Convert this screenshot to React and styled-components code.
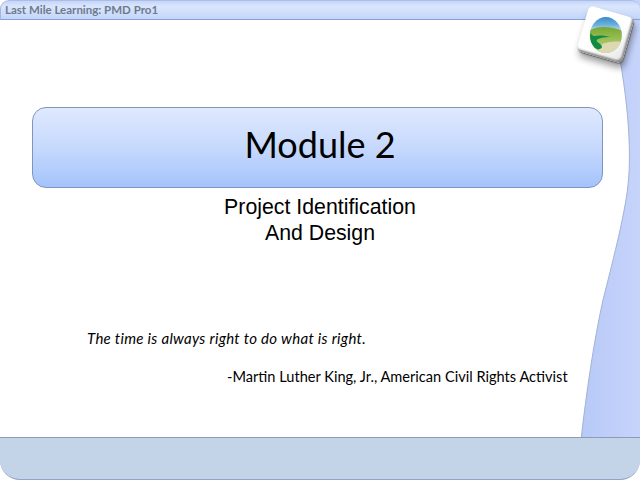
import React from "react";
import styled, { createGlobalStyle } from "styled-components";

const GlobalStyle = createGlobalStyle`
  html, body {
    margin: 0;
    padding: 0;
    background: #ffffff;
  }
`;

function SideBand() {
  return (
    <BandSvg viewBox="0 0 640 480" aria-hidden="true">
      <defs>
        <linearGradient id="band" x1="0" y1="0" x2="1" y2="0">
          <stop offset="0" stopColor="#b8c9f7" />
          <stop offset="1" stopColor="#c6d4fb" />
        </linearGradient>
      </defs>
      <path
        d="M612 0 L640 0 L640 440 L581 440 C 586 395 594 340 603 300 C 611 268 625 215 628 185 C 632 150 628 90 612 20 Z"
        fill="url(#band)"
      />
      <path
        d="M581 440 C 586 395 594 340 603 300 C 611 268 625 215 628 185 C 632 150 628 90 612 20"
        fill="none"
        stroke="#a3b2d6"
        strokeWidth="1"
      />
    </BandSvg>
  );
}

function Logo() {
  return (
    <LogoTile>
      <LogoArt viewBox="-18 -20 36 40">
        <defs>
          <clipPath id="disc">
            <ellipse cx="0" cy="0" rx="16" ry="18" />
          </clipPath>
          <linearGradient id="sky" x1="0" y1="0" x2="0" y2="1">
            <stop offset="0" stopColor="#2a82c6" />
            <stop offset="0.25" stopColor="#6fb2dd" />
            <stop offset="0.42" stopColor="#d5e9ee" />
          </linearGradient>
          <linearGradient id="hill" x1="0" y1="0" x2="0" y2="1">
            <stop offset="0" stopColor="#76a832" />
            <stop offset="0.6" stopColor="#a9c664" />
          </linearGradient>
        </defs>
        <g clipPath="url(#disc)">
          <rect x="-18" y="-20" width="36" height="40" fill="url(#sky)" />
          <path d="M-18 -4 C -8 -10 6 -9 18 -4 L18 20 L-18 20 Z" fill="url(#hill)" />
          <path d="M-5 10 C 3 6 10 6 18 7 L18 20 L-9 20 Z" fill="#dcd8b2" />
          <path
            d="M5 2 C -2 2 -7 3 -9 5 C -10 7 -5 8 -4 11 C -3 14 -8 15 -11 13 C -15 9 -17 4 -15 -2 C -14 0 -13 1 -12 1 C -8 0 -1 0 5 2 Z"
            fill="#0e8c44"
          />
        </g>
      </LogoArt>
    </LogoTile>
  );
}

export default function App() {
  return (
    <>
      <GlobalStyle />
      <Slide>
        <SideBand />
        <Header>
          <HeaderTitle>Last Mile Learning: PMD Pro1</HeaderTitle>
        </Header>
        <Logo />
        <Body>
          <Banner>
            <BannerTitle>Module 2</BannerTitle>
          </Banner>
          <Subtitle>
            Project Identification
            <br />
            And Design
          </Subtitle>
          <Quote>The time is always right to do what is right.</Quote>
          <Attribution>
            -Martin Luther King, Jr., American Civil Rights Activist
          </Attribution>
        </Body>
        <Footer />
      </Slide>
    </>
  );
}

const Slide = styled.div`
  position: relative;
  display: flex;
  flex-direction: column;
  width: 640px;
  height: 480px;
  overflow: hidden;
  background: #ffffff;
`;

const BandSvg = styled.svg`
  position: absolute;
  top: 0;
  left: 0;
  width: 640px;
  height: 480px;
`;

const Header = styled.div`
  position: relative;
  box-sizing: border-box;
  display: flex;
  align-items: center;
  height: 20px;
  padding: 0 0 2px 4px;
  border-radius: 9px 9px 0 0;
  border-top: 1px solid #a9bde6;
  border-left: 1px solid #a3b7e0;
  border-bottom: 1px solid #86a2d8;
  background: linear-gradient(#c4d5f8 0%, #dbe6fd 30%, #c3d5f9 100%);
`;

const HeaderTitle = styled.span`
  font-family: "Lato", "Liberation Sans", sans-serif;
  font-size: 11.5px;
  font-weight: 700;
  color: #6f7b8c;
`;

const LogoTile = styled.div`
  position: absolute;
  top: 11px;
  left: 582px;
  display: flex;
  align-items: center;
  justify-content: center;
  width: 47px;
  height: 47px;
  border-radius: 5px;
  background: linear-gradient(135deg, #ffffff 55%, #e4e4e4 100%);
  box-shadow: inset -2px -2px 2px #8a8a8a, 1px 1px 1px #666666, 3px 5px 7px rgba(0, 0, 0, 0.4);
  transform: rotate(16deg);
`;

const LogoArt = styled.svg`
  width: 36px;
  height: 40px;
  transform: rotate(-16deg);
`;

const Body = styled.div`
  position: relative;
  flex: 1;
  display: flex;
  flex-direction: column;
  padding: 87px 37px 0 32px;
`;

const Banner = styled.div`
  box-sizing: border-box;
  display: flex;
  align-items: center;
  justify-content: center;
  height: 81px;
  padding: 0 0 8px 5px;
  border: 1px solid #7f95bd;
  border-radius: 14px;
  background: linear-gradient(#dfe9fe 0%, #c6d9fd 50%, #a4c3fb 100%);
`;

const BannerTitle = styled.h1`
  margin: 0;
  font-family: "Lato", "Liberation Sans", sans-serif;
  font-size: 36px;
  font-weight: 400;
  color: #000000;
`;

const Subtitle = styled.p`
  margin: 6px 0 0 5px;
  font-family: "Liberation Sans", Arial, sans-serif;
  font-size: 21.3px;
  line-height: 26px;
  text-align: center;
  color: #000000;
`;

const Quote = styled.p`
  margin: 83px 0 0 55px;
  font-family: "Lato", "Liberation Sans", sans-serif;
  font-size: 15px;
  font-style: italic;
  letter-spacing: 0.3px;
  color: #000000;
`;

const Attribution = styled.p`
  margin: 21px 0 0 195px;
  font-family: "Lato", "Liberation Sans", sans-serif;
  font-size: 14.6px;
  color: #000000;
  white-space: nowrap;
`;

const Footer = styled.div`
  position: relative;
  box-sizing: border-box;
  height: 43px;
  border-top: 1px solid #8c9cb8;
  border-bottom: 1px solid #8fa6c6;
  border-radius: 0 0 20px 20px;
  background: #c3d4e8;
`;
